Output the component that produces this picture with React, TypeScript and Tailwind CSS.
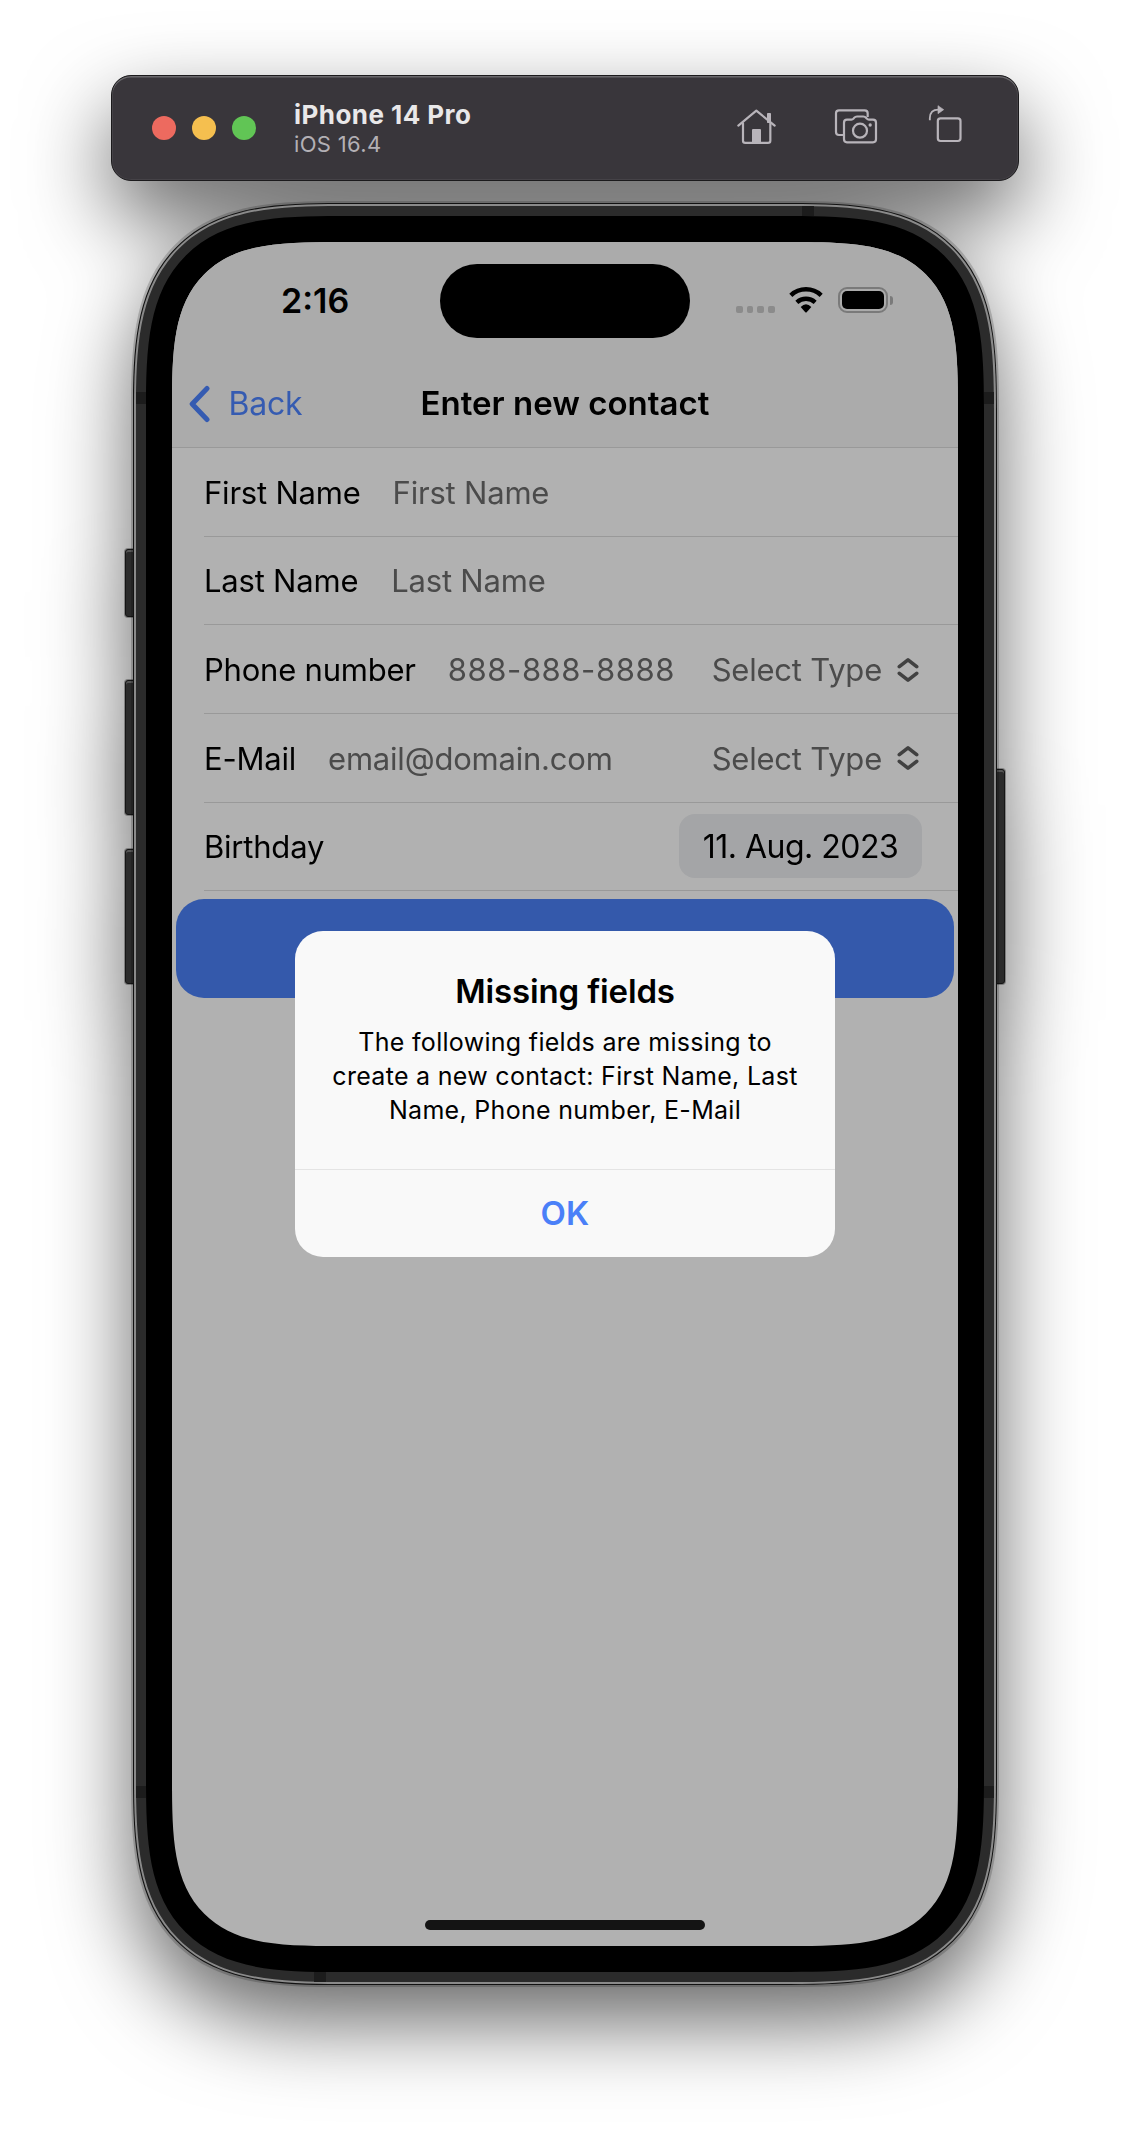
import type { ReactNode } from "react";

function HomeIcon() {
  return (
    <svg width="40" height="38" viewBox="48 48 120 114" fill="none" stroke="#b8b4ba" strokeWidth="6.6" strokeLinecap="round" strokeLinejoin="round">
      <path d="M52 104 L106 59 L161 104" />
      <path d="M66 97 V149 Q66 155.500 73 155.500 H141 Q148 155.500 148 149 V97" />
      <rect x="138" y="66" width="12" height="30" rx="2" fill="#b8b4ba" stroke="none" />
      <path d="M93 156 V117 Q93 114 96 114 H117 Q120 114 120 117 V156 Z" fill="#b8b4ba" stroke="none" />
    </svg>
  );
}

function CameraIcon() {
  return (
    <svg width="44" height="38" viewBox="340 52 132 114" fill="none" stroke="#b8b4ba" strokeWidth="6.6" strokeLinecap="butt" strokeLinejoin="round">
      <path d="M369 136 H355 Q346 136 346 127 V71 Q346 62 355 62 H432 Q441 62 441 71 V82" />
      <path d="M370 99 Q370 90 379 90 H392 Q396 90 398.500 87 L401 84 Q404 80.500 409 80.500 H428 Q433 80.500 436 84 L438.500 87 Q441 90 445 90 H457 Q466 90 466 99 V149 Q466 158 457 158 H379 Q370 158 370 149 Z" />
      <circle cx="418" cy="123" r="21" />
      <circle cx="448.500" cy="106" r="5" fill="#b8b4ba" stroke="none" />
    </svg>
  );
}

function RotateIcon() {
  return (
    <svg width="34" height="40" viewBox="622 42 102 120" fill="none" stroke="#b8b4ba" strokeWidth="6.6" strokeLinecap="butt" strokeLinejoin="round">
      <rect x="651.500" y="85" width="68" height="68" rx="8" />
      <path d="M627.500 91 V84 C628 68 637 59 653 59" strokeWidth="5.500" />
      <path d="M652 47 L669 59 L652 71 Z" fill="#b8b4ba" strokeWidth="2" />
    </svg>
  );
}

function WifiIcon() {
  return (
    <svg width="34" height="26" viewBox="208 111 102 78" fill="none" stroke="#000">
      <path d="M213.500 136 A66.500 66.500 0 0 1 304.500 136" strokeWidth="13.500" />
      <path d="M231.500 157 A40.500 40.500 0 0 1 286.500 157" strokeWidth="13" />
      <path d="M243 171 Q259 155 275 171 L261 186.500 Q259 188.500 257 186.500 Z" fill="#000" stroke="none" />
    </svg>
  );
}

function Battery() {
  return (
    <div className="flex items-center gap-[2px]">
      <div className="h-[26px] w-[50px] rounded-[9px] border-2 border-[#7a7a7a] p-[2px]">
        <div className="h-full w-full rounded-[5px] bg-black" />
      </div>
      <div className="h-[9px] w-[3px] rounded-r-full bg-[#7a7a7a]" />
    </div>
  );
}

function Toolbar() {
  return (
    <div className="flex h-[106px] w-[908px] items-center rounded-[20px] border border-[#1b1a1c] bg-[#39363b] pl-10 shadow-[inset_0_1.500px_0_0_#6a686c,inset_0_0_0_1px_#454247]">
      <div className="flex gap-4">
        <div className="size-6 rounded-full bg-[#ed6a5f]" />
        <div className="size-6 rounded-full bg-[#f5bf4f]" />
        <div className="size-6 rounded-full bg-[#61c555]" />
      </div>
      <div className="ml-[38px] whitespace-nowrap">
        <div className="pt-px text-[26px] font-bold leading-8 tracking-[0.450px] text-[#e9e8e9]">iPhone 14 Pro</div>
        <div className="-mt-px text-[22px] leading-7 tracking-[0.340px] text-[#b3b0b5]">iOS 16.4</div>
      </div>
      <div className="-mt-[5px] ml-auto mr-[56px] flex items-center">
        <HomeIcon />
        <div className="ml-[57px]"><CameraIcon /></div>
        <div className="-mt-[3px] ml-[50px]"><RotateIcon /></div>
      </div>
    </div>
  );
}

function StatusBar() {
  return (
    <div className="h-[118px] pt-[22px]">
      <div className="flex h-[74px] items-center">
        <div className="ml-[109px] w-[159px] text-[34px] font-semibold leading-none">2:16</div>
        <div className="h-[74px] w-[250px] rounded-full bg-black" />
        <div className="ml-[46px] mt-[17px] flex gap-1">
          {[0, 1, 2, 3].map((i) => (
            <div key={i} className="size-[6.700px] rounded-[2px] bg-[#8b8b8b]" />
          ))}
        </div>
        <div className="-mt-0.5 ml-[14.500px]"><WifiIcon /></div>
        <div className="-mt-0.5 ml-[15px]"><Battery /></div>
      </div>
    </div>
  );
}

function NavBar() {
  return (
    <div className="grid h-[88px] grid-cols-[1fr_auto_1fr] items-center border-b border-[#999999]">
      <div className="flex items-center pl-4 text-[32px] tracking-[-0.200px] text-[#355bb1]">
        <svg width="24" height="38" viewBox="0 0 24 38" fill="none" stroke="#355bb1" strokeWidth="5" strokeLinecap="round" strokeLinejoin="round">
          <path d="M19 3.500 L4.200 19 L19 34.500" />
        </svg>
        <span className="ml-[16.500px]">Back</span>
      </div>
      <div className="pt-px text-[33px] font-semibold">Enter new contact</div>
      <div />
    </div>
  );
}

function SelectType() {
  return (
    <div className="ml-auto mr-[39px] flex items-center text-[#4b4b4b]">
      <span>Select Type</span>
      <svg className="-mt-px ml-[15px]" width="22" height="26" viewBox="0 0 22 26" fill="none" stroke="#414141" strokeWidth="3.600" strokeLinecap="round" strokeLinejoin="round">
        <path d="M2.300 9.700 L11 2.800 L19.700 9.700 M2.300 16.300 L11 23.200 L19.700 16.300" />
      </svg>
    </div>
  );
}

function Row({ label, children }: { label: string; children?: ReactNode }) {
  return (
    <div className="ml-8 flex h-[88.670px] items-center whitespace-nowrap border-b border-[#999999] pt-[2px] text-[31px] tracking-[-0.210px]">
      <span>{label}</span>
      {children}
    </div>
  );
}

function Alert() {
  return (
    <div className="absolute left-[123px] top-[689px] w-[540px] rounded-[28px] bg-[#f9f9f9] text-center">
      <div className="border-b border-[#e4e4e4] pb-[42px] pt-10">
        <div className="text-[33px] font-semibold leading-10 tracking-[-0.140px]">Missing fields</div>
        <div className="mt-3.5 text-[25px] leading-[34px] tracking-[0.300px]">
          The following fields are missing to
          <br />
          create a new contact: First Name, Last
          <br />
          Name, Phone number, E-Mail
        </div>
      </div>
      <div className="flex h-[87px] items-center justify-center text-[33px] font-semibold tracking-[0.200px] text-[#4a80f8]">OK</div>
    </div>
  );
}

function Screen() {
  return (
    <div className="relative h-[1704px] w-[786px] overflow-hidden rounded-[168px] bg-[#b1b1b1] text-black [corner-shape:superellipse(1.7)]">
      <div className="bg-[#ababab]">
        <StatusBar />
        <NavBar />
      </div>
      <Row label="First Name">
        <span className="ml-[32px] text-[#4b4b4b]">First Name</span>
      </Row>
      <Row label="Last Name">
        <span className="ml-[33px] text-[#4b4b4b]">Last Name</span>
      </Row>
      <Row label="Phone number">
        <span className="ml-[32px] tracking-[0.560px] text-[#4b4b4b]">888-888-8888</span>
        <SelectType />
      </Row>
      <Row label="E-Mail">
        <span className="ml-8 text-[#4b4b4b]">email@domain.com</span>
        <SelectType />
      </Row>
      <Row label="Birthday">
        <div className="-mt-[2px] ml-auto mr-9 flex h-16 w-[243px] items-center justify-center rounded-2xl bg-[#a4a5a7] pt-[2px] text-[32px] tracking-[-0.500px]">11. Aug. 2023</div>
      </Row>
      <div className="mx-1 mt-[7.500px] h-[99px] rounded-[28px] bg-[#3459ab]" />
      <Alert />
      <div className="absolute bottom-4 left-[253px] h-2.5 w-[280px] rounded-full bg-[#141414]" />
    </div>
  );
}

function Phone() {
  return (
    <div className="relative mt-[22px] h-[1782px] w-[864px]">
      <div className="absolute -left-2 top-[346px] h-[68px] w-3 rounded-l-[3px] border border-[#151515] bg-[#2b2b2b] shadow-[0_0_0_1px_rgba(0,0,0,0.300),inset_0_2px_0_#555555]" />
      <div className="absolute -left-2 top-[477px] h-[135px] w-3 rounded-l-[3px] border border-[#151515] bg-[#2b2b2b] shadow-[0_0_0_1px_rgba(0,0,0,0.300),inset_0_2px_0_#555555]" />
      <div className="absolute -left-2 top-[646px] h-[135px] w-3 rounded-l-[3px] border border-[#151515] bg-[#2b2b2b] shadow-[0_0_0_1px_rgba(0,0,0,0.300),inset_0_2px_0_#555555]" />
      <div className="absolute -right-2 top-[566px] h-[215px] w-3 rounded-r-[3px] border border-[#151515] bg-[#2b2b2b] shadow-[0_0_0_1px_rgba(0,0,0,0.300),inset_0_2px_0_#555555]" />
      <div className="relative rounded-[207px] bg-[#121212] p-px shadow-[0_0_0_2px_rgba(0,0,0,0.180)] [corner-shape:superellipse(1.55)]">
        <div className="rounded-[206px] bg-[#8a8a8a] p-[2px] [corner-shape:superellipse(1.55)]">
          <div className="relative rounded-[204px] bg-[#2b2b2b] p-[10px] [corner-shape:superellipse(1.556)]">
            <div className="absolute left-[666px] top-0 h-[10px] w-3 bg-[#1c1c1c]" />
            <div className="absolute bottom-0 left-[178px] h-[10px] w-3 bg-[#1c1c1c]" />
            <div className="absolute left-0 top-[186px] h-3 w-[10px] bg-[#1c1c1c]" />
            <div className="absolute right-0 top-[186px] h-3 w-[10px] bg-[#1c1c1c]" />
            <div className="absolute bottom-[184px] left-0 h-3 w-[10px] bg-[#1c1c1c]" />
            <div className="absolute bottom-[184px] right-0 h-3 w-[10px] bg-[#1c1c1c]" />
            <div className="relative rounded-[194px] bg-black p-[26px] [corner-shape:superellipse(1.6)]">
              <Screen />
            </div>
          </div>
        </div>
      </div>
    </div>
  );
}

export default function App() {
  return (
    <div className="h-[2136px] w-[1130px] overflow-hidden bg-white font-['Inter',sans-serif]">
      <div className="flex h-[2136px] flex-col items-center pt-[75px] [filter:drop-shadow(0_36px_42px_rgba(0,0,0,0.600))]">
        <Toolbar />
        <Phone />
      </div>
    </div>
  );
}
